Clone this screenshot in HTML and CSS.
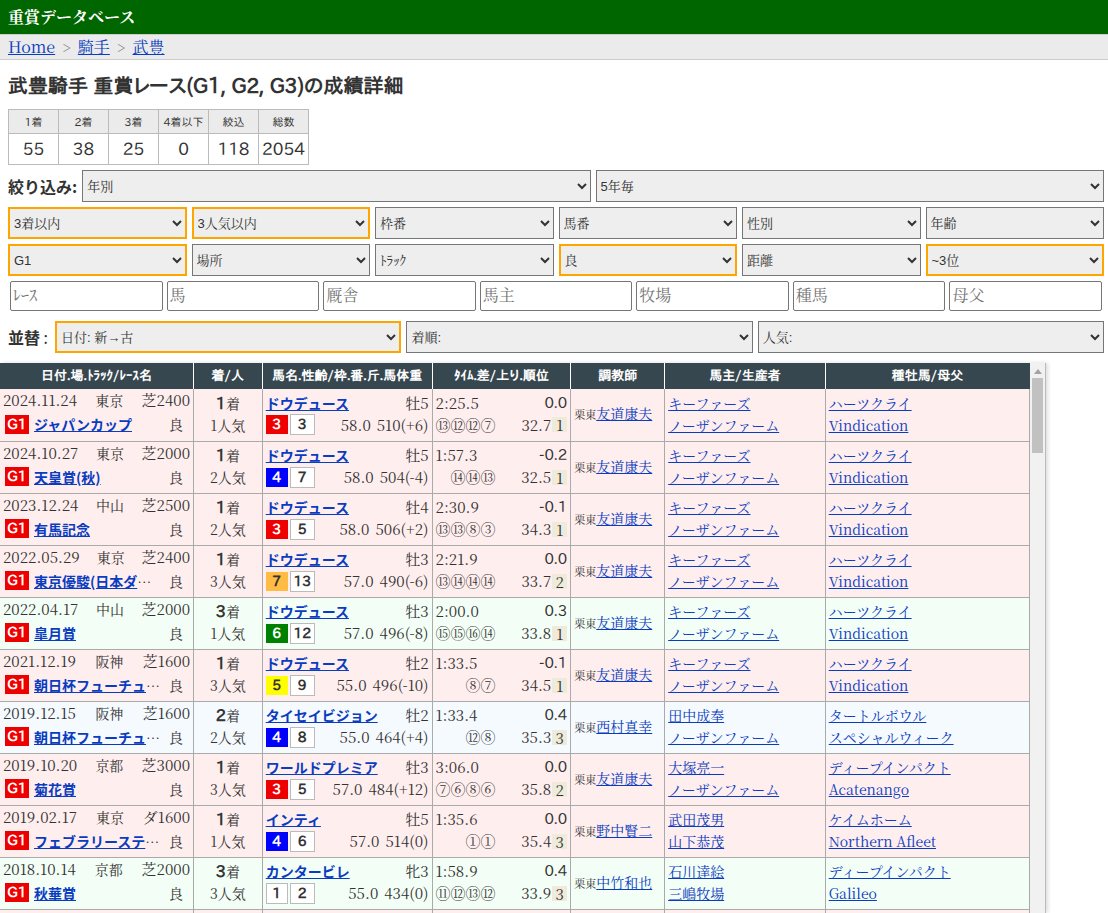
FILE: index.html
```html
<!DOCTYPE html>
<html lang="ja">
<head>
<meta charset="utf-8">
<title>武豊騎手 重賞レースの成績詳細</title>
<link rel="stylesheet" href="styles.css">
</head>
<body>
<header class="site-header">重賞データベース</header>
<nav class="breadcrumb" aria-label="パンくず"><a href="#">Home</a><span class="sep">&gt;</span><a href="#">騎手</a><span class="sep">&gt;</span><a href="#">武豊</a></nav>
<main class="main">
<h1 class="title">武豊騎手 重賞レース(G1, G2, G3)の成績詳細</h1>
<table class="stats">
<thead><tr><th>1着</th><th>2着</th><th>3着</th><th>4着以下</th><th>絞込</th><th>総数</th></tr></thead>
<tbody><tr><td>55</td><td>38</td><td>25</td><td>0</td><td>118</td><td>2054</td></tr></tbody>
</table>
<form class="filters">
<div class="line labelled">
<label class="label" for="year">絞り込み:</label>
<select id="year"><option>年別</option></select>
<select aria-label="5年毎"><option>5年毎</option></select>
</div>
<div class="line">
<select class="on" aria-label="着順"><option>3着以内</option></select>
<select class="on" aria-label="人気"><option>3人気以内</option></select>
<select aria-label="枠番"><option>枠番</option></select>
<select aria-label="馬番"><option>馬番</option></select>
<select aria-label="性別"><option>性別</option></select>
<select aria-label="年齢"><option>年齢</option></select>
</div>
<div class="line">
<select class="on" aria-label="グレード"><option>G1</option></select>
<select aria-label="場所"><option>場所</option></select>
<select aria-label="トラック"><option>ﾄﾗｯｸ</option></select>
<select class="on" aria-label="馬場"><option>良</option></select>
<select aria-label="距離"><option>距離</option></select>
<select class="on" aria-label="上り順位"><option>~3位</option></select>
</div>
<div class="line inputs">
<input type="text" aria-label="レース" placeholder="ﾚｰｽ">
<input type="text" aria-label="馬" placeholder="馬">
<input type="text" aria-label="厩舎" placeholder="厩舎">
<input type="text" aria-label="馬主" placeholder="馬主">
<input type="text" aria-label="牧場" placeholder="牧場">
<input type="text" aria-label="種馬" placeholder="種馬">
<input type="text" aria-label="母父" placeholder="母父">
</div>
<div class="line labelled sort">
<label class="label" for="sort">並替<span class="colon"> :</span></label>
<select id="sort" class="on"><option>日付: 新→古</option></select>
<select aria-label="着順の並び"><option>着順:</option></select>
<select aria-label="人気の並び"><option>人気:</option></select>
</div>
</form>
</main>
<section class="results">
<table class="races">
<colgroup><col class="c-race"><col class="c-rank"><col class="c-horse"><col class="c-time"><col class="c-trainer"><col class="c-owner"><col class="c-sire"></colgroup>
<thead><tr><th>日付.場.ﾄﾗｯｸ/ﾚｰｽ名</th><th>着/人</th><th>馬名.性齢/枠.番.斤.馬体重</th><th>ﾀｲﾑ.差/上り.順位</th><th>調教師</th><th>馬主/生産者</th><th>種牡馬/母父</th></tr></thead>
<tbody id="rows"></tbody>
</table>
<div class="scrollbar" aria-hidden="true"><span class="arrow"></span><span class="thumb"></span></div>
</section>
<script src="app.js"></script>
</body>
</html>
```

FILE: styles.css
```css
:root {
  --mincho: "Noto Serif CJK JP", "Noto Serif JP", "IPAPMincho", serif;
  --gothic: "IPAPGothic", "Noto Sans CJK JP", sans-serif;
  --kana: "Noto Sans CJK JP", sans-serif;
  --link: #0a3cc0;
  --line: #aaa;
}
* { box-sizing: border-box; }
body {
  margin: 0;
  height: 100vh;
  display: flex;
  flex-direction: column;
  overflow: hidden;
  color: #333;
  background: #fff;
  font: 16px/24px var(--mincho);
}
a { color: var(--link); }
.site-header {
  padding: 5px 8px;
  background: #060;
  color: #fff;
  font-weight: bold;
}
.breadcrumb {
  padding: 0 8px;
  background: #ebebeb;
  border-top: 1px solid #ccc;
  border-bottom: 1px solid #ccc;
}
.sep { padding: 0 7px; color: #777; font-size: 15px; }
.main { padding: 10px 4px 10px 8px; }
.title { margin: 0 0 9px; font: bold 20px/30px var(--gothic); }
.stats { border-collapse: collapse; table-layout: fixed; width: 301px; font-family: var(--gothic); text-align: center; }
.stats th, .stats td { border: 1px solid #bbb; padding: 0; white-space: nowrap; }
.stats th { height: 24px; background: #ebebeb; font-size: 11px; font-weight: normal; line-height: 16px; }
.stats td { height: 31px; font-size: 17px; line-height: 24px; }
.filters { display: grid; gap: 5px; margin-top: 5px; }
.line { display: grid; grid-auto-flow: column; grid-auto-columns: minmax(0, 1fr); gap: 5px; align-items: center; }
.labelled { grid-template-columns: auto; }
.label { font: bold 16px/24px var(--kana); white-space: nowrap; }
.colon { font-weight: normal; padding-right: 2px; }
select {
  width: 100%;
  height: 32px;
  padding: 0;
  border: 1px solid #767676;
  border-radius: 0;
  background: #eee;
  color: #333;
  font: 13px "Liberation Sans", var(--mincho);
}
select.on { border: 2px solid orange; }
.inputs { gap: 4px; padding: 0 2px; }
input {
  width: 100%;
  height: 30px;
  padding: 0 2px 4px;
  border: 1px solid #767676;
  border-radius: 2px;
  font: 16px var(--mincho);
}
input::placeholder { color: #757575; }
.sort { margin-top: 5px; }
.results {
  flex: 1;
  min-height: 0;
  display: flex;
  width: 1046px;
  max-width: 100%;
  overflow: hidden;
  border-right: 1px solid #bbb;
  box-shadow: 2px 0 4px #ddd;
}
.races { flex: 1; border-collapse: collapse; table-layout: fixed; align-self: flex-start; font-size: 15px; line-height: 22px; }
.c-race { width: 189px; }
.c-rank { width: 69px; }
.c-horse { width: 170px; }
.c-time { width: 139px; }
.c-trainer { width: 94px; }
.c-owner { width: 161px; }
.c-sire { width: 205px; }
.races th {
  height: 26px;
  padding: 0;
  background: #37474f;
  color: #fff;
  font: bold 13px/20px var(--gothic);
  border-right: 1px solid #fff;
}
.races th:last-child { border-right: 0; }
.races td { height: 52px; padding: 0 3px 2px; border-right: 1px solid var(--line); border-bottom: 1px solid var(--line); white-space: nowrap; }
.p1 { background: #fee; }
.p2 { background: #f5faff; }
.p3 { background: #f3fff6; }
.races a, .place, .going, .rank { font-size: 14px; }
.races .race { vertical-align: top; }
.pair { display: flex; justify-content: space-between; align-items: center; }
.when { line-height: 22px; }
.race-name { gap: 5px; padding: 3px 7px 0 2px; line-height: 20px; }
.race-name .name { flex: 1; min-width: 0; max-width: 130px; overflow: hidden; text-overflow: ellipsis; }
.race-name .going { margin-left: auto; }
.name { font-size: 14px; }
.name a { font-family: var(--kana); font-weight: bold; }
.grade, .num { font: bold 14px/19px var(--gothic); text-align: center; }
.grade { width: 24px; background: #e00; color: #fff; }
.rank { text-align: center; }
.rank b { font: bold 16px/22px var(--gothic); }
.nums { display: flex; align-items: center; gap: 2px; }
.num { width: 22px; }
.box, .w1 { background: #fff; border: 1px solid #bbb; }
.num.box { width: 25px; }
.w3 { background: #e00; color: #fff; }
.w4 { background: #00f; color: #fff; }
.w5 { background: #ff0; }
.w6 { background: green; color: #fff; }
.w7 { background: #fb4; }
.weights { display: flex; gap: 6px; }
.diff { font: 15px/22px var(--gothic); }
.pass { width: 60px; text-align: right; }
.up { display: flex; align-items: center; gap: 1px; }
.order { width: 15px; line-height: 15px; text-align: center; background: #eeebdb; }
.p3 .order { background: #f0eadb; }
.aff { font-size: 11px; }
.scrollbar { width: 15px; background: #f1f1f1; display: flex; flex-direction: column; align-items: center; padding-top: 6px; gap: 4px; }
.arrow { border: 4px solid transparent; border-top: 0; border-bottom: 5px solid #a3a3a3; }
.thumb { width: 11px; height: 75px; background: #c1c1c1; }
```

FILE: app.js
```js
const DEUCE = ["友道康夫", "キーファーズ", "ノーザンファーム", "ハーツクライ", "Vindication"];
// date, place, track, race, rank, popularity, horse, sex/age, bracket, number, weights, time, margin, passing, last 3f, order, people
const races = [
  ["2024.11.24", "東京", "芝2400", "ジャパンカップ", 1, 1, "ドウデュース", "牡5", 3, 3, "58.0 510(+6)", "2:25.5", "0.0", "⑬⑫⑫⑦", "32.7", 1, DEUCE],
  ["2024.10.27", "東京", "芝2000", "天皇賞(秋)", 1, 2, "ドウデュース", "牡5", 4, 7, "58.0 504(-4)", "1:57.3", "-0.2", "⑭⑭⑬", "32.5", 1, DEUCE],
  ["2023.12.24", "中山", "芝2500", "有馬記念", 1, 2, "ドウデュース", "牡4", 3, 5, "58.0 506(+2)", "2:30.9", "-0.1", "⑬⑬⑧③", "34.3", 1, DEUCE],
  ["2022.05.29", "東京", "芝2400", "東京優駿(日本ダービー)", 1, 3, "ドウデュース", "牡3", 7, 13, "57.0 490(-6)", "2:21.9", "0.0", "⑬⑭⑭⑭", "33.7", 2, DEUCE],
  ["2022.04.17", "中山", "芝2000", "皐月賞", 3, 1, "ドウデュース", "牡3", 6, 12, "57.0 496(-8)", "2:00.0", "0.3", "⑮⑮⑯⑭", "33.8", 1, DEUCE],
  ["2021.12.19", "阪神", "芝1600", "朝日杯フューチュリティステークス", 1, 3, "ドウデュース", "牡2", 5, 9, "55.0 496(-10)", "1:33.5", "-0.1", "⑧⑦", "34.5", 1, DEUCE],
  ["2019.12.15", "阪神", "芝1600", "朝日杯フューチュリティステークス", 2, 2, "タイセイビジョン", "牡2", 4, 8, "55.0 464(+4)", "1:33.4", "0.4", "⑫⑧", "35.3", 3, ["西村真幸", "田中成奉", "ノーザンファーム", "タートルボウル", "スペシャルウィーク"]],
  ["2019.10.20", "京都", "芝3000", "菊花賞", 1, 3, "ワールドプレミア", "牡3", 3, 5, "57.0 484(+12)", "3:06.0", "0.0", "⑦⑥⑧⑥", "35.8", 2, ["友道康夫", "大塚亮一", "ノーザンファーム", "ディープインパクト", "Acatenango"]],
  ["2019.02.17", "東京", "ダ1600", "フェブラリーステークス", 1, 1, "インティ", "牡5", 4, 6, "57.0 514(0)", "1:35.6", "0.0", "①①", "35.4", 3, ["野中賢二", "武田茂男", "山下恭茂", "ケイムホーム", "Northern Afleet"]],
  ["2018.10.14", "京都", "芝2000", "秋華賞", 3, 3, "カンタービレ", "牝3", 1, 2, "55.0 434(0)", "1:58.9", "0.4", "⑪⑫⑬⑫", "33.9", 3, ["中竹和也", "石川達絵", "三嶋牧場", "ディープインパクト", "Galileo"]],
  ["2017.10.29", "東京", "芝2000", "天皇賞(秋)", 1, 1, "キタサンブラック", "牡5", 4, 7, "58.0 542(0)", "2:08.3", "0.0", "⑪⑤②", "38.5", 1, ["清水久詞", "大野商事", "ヤナガワ牧場", "ブラックタイド", "サクラバクシンオー"]]
];
const link = (text) => `<a href="#">${text}</a>`;
document.getElementById("rows").innerHTML = races.map(([date, place, track, race, rank, pop, horse, sex, bracket, number, weights, time, diff, pass, last, order, people]) => `
<tr class="p${rank}">
<td class="race"><div class="pair when"><span>${date}</span><span class="place">${place}</span><span>${track}</span></div>
<div class="pair race-name"><span class="grade">G1</span><span class="name">${link(race)}</span><span class="going">良</span></div></td>
<td class="rank"><div><b>${rank}</b>着</div><div>${pop}人気</div></td>
<td><div class="pair"><span class="name">${link(horse)}</span><span>${sex}</span></div>
<div class="pair"><span class="nums"><span class="num w${bracket}">${bracket}</span><span class="num box">${number}</span></span><span class="weights">${weights.split(" ").map((w) => `<span>${w}</span>`).join("")}</span></div></td>
<td><div class="pair"><span>${time}</span><span class="diff">${diff}</span></div>
<div class="pair"><span class="pass">${pass}</span><span class="up">${last}<span class="order">${order}</span></span></div></td>
<td><span class="aff">栗東</span>${link(people[0])}</td>
<td><div>${link(people[1])}</div><div>${link(people[2])}</div></td>
<td><div>${link(people[3])}</div><div>${link(people[4])}</div></td>
</tr>`).join("");
```
